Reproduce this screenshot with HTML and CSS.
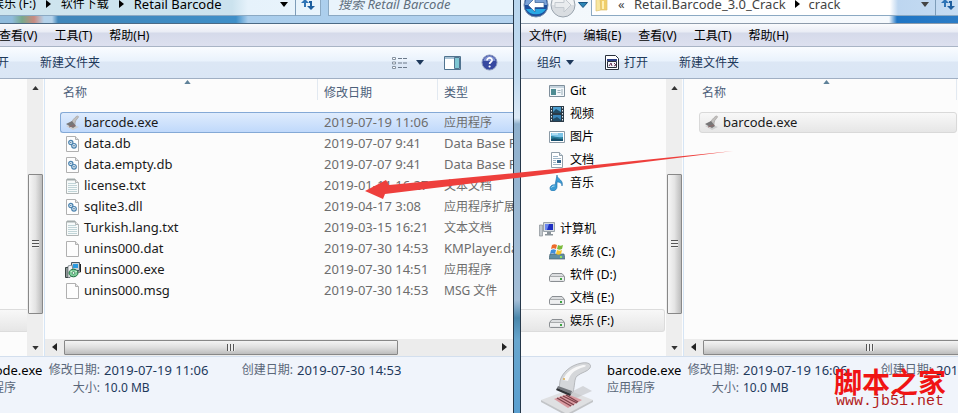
FILE: index.html
```html
<!DOCTYPE html>
<html lang="zh-CN">
<head>
    <meta charset="UTF-8">
    <meta name="viewport" content="width=device-width, initial-scale=1.0">
    <title>Retail Barcode</title>
    <link rel="stylesheet" href="styles.css">
</head>
<body>
    <svg class="symbols" aria-hidden="true">
        <symbol id="i-page" viewBox="0 0 16 16">
            <path d="M1.5 .5h9l3 3v12h-12z" fill="#fdfdfd" stroke="#b0b0b0"/>
            <path d="M10.500 .5v3h3" fill="#e4e4e4" stroke="#b0b0b0"/>
        </symbol>
        <symbol id="i-gear" viewBox="0 0 16 16">
            <path d="M1.500 .5h9l3 3v12h-12z" fill="#fdfdfd" stroke="#b0b0b0"/>
            <path d="M10.500 .5v3h3" fill="#e4e4e4" stroke="#b0b0b0"/>
            <circle cx="5.800" cy="6.500" r="2.100" fill="#e3eff8" stroke="#4a82ae" stroke-width="1.200"/>
            <circle cx="9" cy="9.800" r="2.300" fill="#e3eff8" stroke="#4a82ae" stroke-width="1.200"/>
            <circle cx="5.800" cy="6.500" r=".6" fill="#28587f"/>
            <circle cx="9" cy="9.800" r=".7" fill="#28587f"/>
        </symbol>
        <symbol id="i-txt" viewBox="0 0 16 16">
            <path d="M1.500 1.500h9l3 3v11h-12z" fill="#f7fafa" stroke="#b0b5b5"/>
            <path d="M3 0v3M5 0v3M7 0v3M9 0v3" stroke="#8e9a9a" stroke-width=".8"/>
            <path d="M3 5.500h8M3 7.500h9M3 9.500h9M3 11.500h9M3 13.500h9" stroke="#b9cfd3" stroke-width=".9"/>
            <path d="M10.500 1.500v3h3" fill="#e4e4e4" stroke="#b0b5b5"/>
        </symbol>
        <symbol id="i-setup" viewBox="0 0 16 16">
            <path d="M.5 5.500h4v10h-4z" fill="#8d9795" stroke="#3b4443"/>
            <path d="M6.500 .5h8v8h-8z" fill="#c9d4da" stroke="#4c5a63"/>
            <path d="M8 2h5v4H8z" fill="#2c9be0"/>
            <path d="M12 10h3.500V2" fill="none" stroke="#222"/>
            <path d="M3 4l4-1 2 10-6 3z" fill="#f4f6f7" stroke="#59636b" stroke-width=".7"/>
            <ellipse cx="8.500" cy="11" rx="4.500" ry="3.800" fill="#7ecf9b" stroke="#1a6b3b"/>
            <path d="M5.500 9l3 2 3.500-2" fill="none" stroke="#d8f8d9"/>
            <circle cx="8.500" cy="11" r="1.300" fill="#fff" stroke="#1a6b3b" stroke-width=".6"/>
        </symbol>
        <symbol id="i-scanner" viewBox="0 0 54 54">
            <path d="M1 39l27-10 25 10-26 15z" fill="#dfe0e2"/>
            <path d="M1 39l26 14v2L1 41zM27 53l26-14v2L27 55z" fill="#c2c4c7"/>
            <path d="M25 34l18-9 9 5-20 9z" fill="#b7b7ba" opacity=".5"/>
            <path d="M14 38l13-5 15 6-14 8z" fill="#d99aa0"/>
            <path d="M17 37l14 8M20 36l14 8M23 35l14 7M26 34l12 7" stroke="#7b3f47" stroke-width="1.200"/>
            <path d="M20 20C22 12 30 4 42 2c6-1 10 1 8 5-3 4-8 4-13 8-3 3-2 10-4 16l-2 2-12-5z" fill="#d5d7da" stroke="#a9acb0" stroke-width=".8"/>
            <path d="M23 19c3-8 10-13 20-15 3 0 4 1 1 2-9 3-13 5-16 14z" fill="#f7f7f8"/>
            <path d="M18 25l14 5-1 3-14-6z" fill="#75787d"/>
            <path d="M17 27l14 6-1 2-14-6z" fill="#2f3135"/>
            <circle cx="24" cy="18" r="1" fill="#d8a848"/>
        </symbol>
        <symbol id="i-scan-small" viewBox="0 0 16 16">
            <path d="M1 11l6-2 7 3-6 3z" fill="#cfcfcf"/>
            <path d="M6 8c1-2 3-5 6-7 2 0 2 1 0 3-2 2-2 4-2 7z" fill="#c2c0be" stroke="#9d9a98" stroke-width=".6"/>
            <path d="M1 9l6-3 4 5-3 2z" fill="#777677"/>
            <path d="M4 12l6-2" stroke="#8e6b6b"/>
        </symbol>
        <symbol id="i-app" viewBox="0 0 16 16">
            <path d="M.5 2.500h15v11H.5z" fill="#f4f8fb" stroke="#7f8f9c"/>
            <path d="M1 3h14v2H1z" fill="#c6d4de"/>
            <path d="M2 6h5v6H2z" fill="#4d8b92"/>
            <path d="M8.500 7.500h3M8.500 9.500h3M13 6v6" stroke="#9db0bb"/>
        </symbol>
        <symbol id="i-video" viewBox="0 0 16 16">
            <path d="M1 0h14v16H1z" fill="#2b3b48"/>
            <path d="M4 1h8v6H4z" fill="#4c9fd0"/>
            <path d="M4 9h8v6H4z" fill="#3b86ba"/>
            <path d="M4 6l3-3 5 3v1H4zM4 13l4-2 4 3v1H4z" fill="#224d68"/>
            <path d="M2.500 1v14M13.500 1v14" stroke="#e6ecf0" stroke-dasharray="1.500 1.500"/>
        </symbol>
        <symbol id="i-picture" viewBox="0 0 16 16">
            <path d="M.5 2.500h15v11H.5z" fill="#fff" stroke="#8b9aa6"/>
            <path d="M2 4h12v8H2z" fill="#7cc4e8"/>
            <path d="M2 7c4 0 6 2 12 1v4H2z" fill="#2a7f9c"/>
            <path d="M2 10c5-2 8 1 12 0v2H2z" fill="#17506e"/>
            <path d="M3 5h6" stroke="#e4f5fc"/>
        </symbol>
        <symbol id="i-document" viewBox="0 0 16 16">
            <path d="M2.500 .5h8l3 3v12h-11z" fill="#fff" stroke="#92a0ab"/>
            <path d="M10.500 .5v3h3" fill="#dde6ec" stroke="#92a0ab"/>
            <path d="M4 4.500h5M4 6.500h8M4 8.500h3M4 10.500h3M4 12.500h8" stroke="#9fb6c8"/>
            <path d="M8 8h4v3H8z" fill="#33648b"/>
        </symbol>
        <symbol id="i-music" viewBox="0 0 16 16">
            <path d="M8 0c0 4 7 5 5 11 0-3-2-4-5-4v5c0 2-2 4-4 4s-3-1-3-3c0-2 3-4 5-3z" fill="#3a9bd3" stroke="#1c6da8" stroke-width=".6"/>
            <path d="M2.500 12.500c.5-1 2-1.500 3-1.500" stroke="#b6e2f8" fill="none"/>
        </symbol>
        <symbol id="i-computer" viewBox="0 0 16 16">
            <path d="M.5 4h3v11h-3z" fill="#c2c8cd" stroke="#8a9197" stroke-width=".7"/>
            <path d="M4.500 1.500h11v9h-11z" fill="#d5dbe0" stroke="#9aa2a9"/>
            <path d="M6 3h8v6H6z" fill="#1d2fc2"/>
            <path d="M6 3h4L8 9H6z" fill="#6b87ee"/>
            <path d="M8 11h4v2h2v1.500H6V13h2z" fill="#8a939a"/>
        </symbol>
        <symbol id="i-drive" viewBox="0 0 16 16">
            <path d="M3 6.500h10l2.500 3v4q0 1-1 1h-13q-1 0-1-1v-4z" fill="#dcdee0" stroke="#8b8f93"/>
            <path d="M1 10h14v3.500H1z" fill="#eeeff0"/>
            <path d="M1 9.500h14" stroke="#a8abad"/>
            <path d="M11 11h2v2h-2z" fill="#3fa443"/>
        </symbol>
        <symbol id="i-windrive" viewBox="0 0 16 16">
            <path d="M1 10h14l1 5H0z" fill="#5f8ea3" stroke="#4a6674" stroke-width=".7"/>
            <path d="M11 12h2v2h-2z" fill="#8ee25c"/>
            <path d="M3 1c2-1 3-1 5 0L7 5C5 4 4 4 2 5z" fill="#ec6a2b"/>
            <path d="M9 1c2 1 3 1 5 0l-1 4c-2 1-3 1-5 0z" fill="#7cbb3c"/>
            <path d="M2 6c2-1 3-1 5 0l-1 4c-2-1-3-1-5 0z" fill="#3f8edb"/>
            <path d="M8 6c2 1 3 1 5 0l-1 4c-2 1-3 1-5 0z" fill="#f6c52e"/>
        </symbol>
        <symbol id="i-refresh" viewBox="0 0 14 14">
            <path d="M4 10V4" stroke="#2f74b5" stroke-width="2"/>
            <path d="M0 6l4-4 4 4z" fill="#2f74b5"/>
            <path d="M8 5h2v5" fill="none" stroke="#1f5f9f" stroke-width="2"/>
            <path d="M6 9l4 4 4-4z" fill="#1f5f9f"/>
        </symbol>
        <symbol id="i-down" viewBox="0 0 8 5"><path d="M0 0h8L4 5z" fill="currentColor"/></symbol>
        <symbol id="i-up" viewBox="0 0 8 5"><path d="M0 5h8L4 0z" fill="currentColor"/></symbol>
        <symbol id="i-right" viewBox="0 0 5 8"><path d="M0 0v8l5-4z" fill="currentColor"/></symbol>
        <symbol id="i-left" viewBox="0 0 5 8"><path d="M5 0v8L0 4z" fill="currentColor"/></symbol>
    </svg>

    <main class="desktop">
        <section class="window window-left">
            <header class="topbar">
                <nav class="address">
                    <a href="#">娱乐 (F:)</a>
                    <svg class="tri-h"><use href="#i-right"/></svg>
                    <a href="#">软件下载</a>
                    <svg class="tri-h"><use href="#i-right"/></svg>
                    <a href="#" class="latin">Retail Barcode</a>
                    <button class="history" aria-label="历史记录"><svg class="tri-v"><use href="#i-down"/></svg></button>
                    <button class="refresh" aria-label="刷新"><svg width="16" height="14"><use href="#i-refresh"/></svg></button>
                </nav>
                <label class="search">
                    <input type="search" placeholder="搜索 Retail Barcode" aria-label="搜索">
                    <svg width="15" height="15" viewBox="0 0 15 15"><circle cx="9" cy="5" r="4" fill="#e4f2fb" stroke="#3f6f9f" stroke-width="2"/><path d="M6 8l-5 6" stroke="#3f6f9f" stroke-width="2.500"/></svg>
                </label>
            </header>
            <nav class="menubar">
                <button>查看(V)</button>
                <button>工具(T)</button>
                <button>帮助(H)</button>
            </nav>
            <div class="toolbar">
                <button>打开</button>
                <button>新建文件夹</button>
                <div class="view-tools">
                    <button class="view" aria-label="更改视图">
                        <svg width="17" height="14" viewBox="0 0 17 14"><path d="M1.500 1.500h3v2h-3zM1.500 6h3v2h-3zM1.500 10.500h3v2h-3z" fill="#fff" stroke="#8592a1"/><path d="M7 2.500h4M12 2.500h4M7 7h4M12 7h4M7 11.500h4M12 11.500h4" stroke="#6c7a8b"/></svg>
                        <svg class="tri-v"><use href="#i-down"/></svg>
                    </button>
                    <button aria-label="预览窗格"><svg width="17" height="14" viewBox="0 0 17 14"><path d="M.5 .5h16v13H.5z" fill="#fff" stroke="#50738f"/><path d="M1 1h10v2H1z" fill="#a9c3d6"/><path d="M10.500 1.500h5v11h-5z" fill="#7fc6d3" stroke="#50738f"/></svg></button>
                    <button aria-label="帮助"><svg width="17" height="17" viewBox="0 0 17 17"><circle cx="8.500" cy="8.500" r="7.500" fill="#3748a0" stroke="#8b98bd"/><path d="M2.500 7a6 5 0 0 1 12 0z" fill="#7f90d0"/><path d="M6 6.500c0-3.500 5.500-3.300 5 0-.3 1.500-2.400 1.700-2.400 3.500" fill="none" stroke="#fff" stroke-width="1.700"/><circle cx="8.600" cy="12.500" r="1.100" fill="#fff"/></svg></button>
                </div>
            </div>
            <div class="panes">
                <aside class="tree tree-cut"><a class="current" href="#" aria-label="娱乐 (F:)"></a></aside>
                <div class="vscroll">
                    <svg class="tri-v"><use href="#i-up"/></svg>
                    <div class="thumb"><span class="grip"></span></div>
                    <svg class="tri-v"><use href="#i-down"/></svg>
                </div>
                <div class="files">
                    <table>
                        <colgroup><col class="col-name"><col class="col-date"><col></colgroup>
                        <thead>
                            <tr>
                                <th class="sorted">名称<svg class="sort"><use href="#i-up"/></svg></th>
                                <th>修改日期</th>
                                <th>类型</th>
                            </tr>
                        </thead>
                        <tbody>
                            <tr class="selected">
                                <td class="latin"><svg class="icon"><use href="#i-scan-small"/></svg>barcode.exe</td>
                                <td class="latin">2019-07-19 11:06</td>
                                <td>应用程序</td>
                            </tr>
                            <tr>
                                <td class="latin"><svg class="icon"><use href="#i-gear"/></svg>data.db</td>
                                <td class="latin">2019-07-07 9:41</td>
                                <td class="latin">Data Base File</td>
                            </tr>
                            <tr>
                                <td class="latin"><svg class="icon"><use href="#i-gear"/></svg>data.empty.db</td>
                                <td class="latin">2019-07-07 9:41</td>
                                <td class="latin">Data Base File</td>
                            </tr>
                            <tr>
                                <td class="latin"><svg class="icon"><use href="#i-txt"/></svg>license.txt</td>
                                <td class="latin">2019-01-11 16:27</td>
                                <td>文本文档</td>
                            </tr>
                            <tr>
                                <td class="latin"><svg class="icon"><use href="#i-gear"/></svg>sqlite3.dll</td>
                                <td class="latin">2019-04-17 3:08</td>
                                <td>应用程序扩展</td>
                            </tr>
                            <tr>
                                <td class="latin"><svg class="icon"><use href="#i-txt"/></svg>Turkish.lang.txt</td>
                                <td class="latin">2019-03-15 16:21</td>
                                <td>文本文档</td>
                            </tr>
                            <tr>
                                <td class="latin"><svg class="icon"><use href="#i-page"/></svg>unins000.dat</td>
                                <td class="latin">2019-07-30 14:53</td>
                                <td class="latin">KMPlayer.dat</td>
                            </tr>
                            <tr>
                                <td class="latin"><svg class="icon"><use href="#i-setup"/></svg>unins000.exe</td>
                                <td class="latin">2019-07-30 14:51</td>
                                <td>应用程序</td>
                            </tr>
                            <tr>
                                <td class="latin"><svg class="icon"><use href="#i-page"/></svg>unins000.msg</td>
                                <td class="latin">2019-07-30 14:53</td>
                                <td>MSG 文件</td>
                            </tr>
                        </tbody>
                    </table>
                    <div class="hscroll">
                        <svg class="tri-h"><use href="#i-left"/></svg>
                        <div class="thumb"><span class="grip"></span></div>
                        <svg class="tri-h"><use href="#i-right"/></svg>
                    </div>
                </div>
            </div>
            <footer class="details">
                <dl>
                    <dt class="name latin">barcode.exe</dt>
                    <dt>修改日期:</dt>
                    <dd class="latin">2019-07-19 11:06</dd>
                    <dt>创建日期:</dt>
                    <dd class="latin">2019-07-30 14:53</dd>
                    <dt class="kind">应用程序</dt>
                    <dt>大小:</dt>
                    <dd>10.0 MB</dd>
                </dl>
            </footer>
        </section>

        <div class="frame"></div>

        <section class="window window-right">
            <header class="topbar">
                <div class="travel">
                    <button aria-label="后退"><svg width="26" height="26" viewBox="0 0 26 26"><circle cx="13" cy="13" r="12" fill="#1d4f9c" stroke="#7e94b0"/><path d="M2 13a11 11 0 0 1 22 0z" fill="#7aa2d6"/><path d="M3 17a11 9 0 0 0 20 0z" fill="#27a8e4"/><path d="M12 6l-7 7 7 7v-4.500h9v-5h-9z" fill="#fff" stroke="#355f93" stroke-width=".7"/></svg></button>
                    <button aria-label="前进"><svg width="26" height="26" viewBox="0 0 26 26"><circle cx="13" cy="13" r="12" fill="#d9dde1" stroke="#9aa4ae"/><path d="M2 13a11 11 0 0 1 22 0z" fill="#f1f3f4"/><path d="M14 6l7 7-7 7v-4.500H5v-5h9z" fill="#e9ecee" stroke="#c3c9cf"/></svg></button>
                    <button aria-label="最近的页面"><svg width="10" height="6" viewBox="0 0 10 6"><path d="M.5 .5h9L5 5.500z" fill="#2d86b5" stroke="#1b5684"/></svg></button>
                </div>
                <nav class="address">
                    <svg width="14" height="16" viewBox="0 0 14 16"><path d="M1 2l5-2v14l-5 1z" fill="#f8e7a0" stroke="#dcc070" stroke-width=".7"/><path d="M5 3h7v11H6z" fill="#f1cf6b" stroke="#dcc070" stroke-width=".7"/><path d="M7 5h2v8H7z" fill="#fff0b3"/></svg>
                    <span class="more">«</span>
                    <a href="#" class="latin">Retail.Barcode_3.0_Crack</a>
                    <svg class="tri-h"><use href="#i-right"/></svg>
                    <a href="#" class="latin">crack</a>
                    <button class="history" aria-label="历史记录"><svg class="tri-v"><use href="#i-down"/></svg></button>
                    <button class="refresh" aria-label="刷新"><svg width="16" height="14"><use href="#i-refresh"/></svg></button>
                </nav>
            </header>
            <nav class="menubar">
                <button>文件(F)</button>
                <button>编辑(E)</button>
                <button>查看(V)</button>
                <button>工具(T)</button>
                <button>帮助(H)</button>
            </nav>
            <div class="toolbar">
                <button>组织 <svg class="tri-v"><use href="#i-down"/></svg></button>
                <button><svg width="14" height="15" viewBox="0 0 14 15"><path d="M.5 .5h10l3 3v11H.5z" fill="#fff" stroke="#29303c"/><path d="M2 4h10v2H2z" fill="#2b3e86"/><path d="M2.500 6.500h9v6h-9z" fill="#f3f5fa" stroke="#29303c"/><path d="M4 11l2-3 1 3M9 8l2 2-2 1" stroke="#6a3556" fill="none"/></svg>打开</button>
                <button>新建文件夹</button>
            </div>
            <div class="panes">
                <aside class="tree">
                    <a href="#"><svg class="icon"><use href="#i-app"/></svg>Git</a>
                    <a href="#"><svg class="icon"><use href="#i-video"/></svg>视频</a>
                    <a href="#"><svg class="icon"><use href="#i-picture"/></svg>图片</a>
                    <a href="#"><svg class="icon"><use href="#i-document"/></svg>文档</a>
                    <a href="#"><svg class="icon"><use href="#i-music"/></svg>音乐</a>
                    <a href="#" class="root"><svg class="icon"><use href="#i-computer"/></svg>计算机</a>
                    <a href="#"><svg class="icon"><use href="#i-windrive"/></svg>系统 (C:)</a>
                    <a href="#"><svg class="icon"><use href="#i-drive"/></svg>软件 (D:)</a>
                    <a href="#"><svg class="icon"><use href="#i-drive"/></svg>文档 (E:)</a>
                    <a href="#" class="current"><svg class="icon"><use href="#i-drive"/></svg>娱乐 (F:)</a>
                </aside>
                <div class="vscroll">
                    <svg class="tri-v"><use href="#i-up"/></svg>
                    <div class="thumb"><span class="grip"></span></div>
                    <svg class="tri-v"><use href="#i-down"/></svg>
                </div>
                <div class="files">
                    <table>
                        <thead>
                            <tr><th class="sorted">名称<svg class="sort"><use href="#i-up"/></svg></th></tr>
                        </thead>
                        <tbody>
                            <tr class="inactive"><td class="latin"><svg class="icon"><use href="#i-scan-small"/></svg>barcode.exe</td></tr>
                        </tbody>
                    </table>
                    <div class="hscroll">
                        <svg class="tri-h"><use href="#i-left"/></svg>
                        <div class="thumb"><span class="grip"></span></div>
                    </div>
                </div>
            </div>
            <footer class="details">
                <svg class="preview"><use href="#i-scanner"/></svg>
                <dl>
                    <dt class="name latin">barcode.exe</dt>
                    <dt>修改日期:</dt>
                    <dd class="latin">2019-07-19 16:06</dd>
                    <dt>创建日期:</dt>
                    <dd class="latin">2019-07-19</dd>
                    <dt class="kind">应用程序</dt>
                    <dt>大小:</dt>
                    <dd>10.0 MB</dd>
                </dl>
            </footer>
        </section>

        <svg class="drag-arrow" viewBox="0 0 958 413" preserveAspectRatio="none">
            <path d="M733 151L525 172L389 185L386 180L365 191L383 199L385 194L525 177Z" fill="#ee3f3c"/>
        </svg>

        <div class="watermark">
            <strong>脚本之家</strong>
            <span>www.jb51.net</span>
        </div>
    </main>
</body>
</html>
```

FILE: styles.css
```css
* {
    box-sizing: border-box;
}
body {
    margin: 0;
    font-family: "Noto Sans", "Noto Sans CJK SC", sans-serif;
    font-size: 12px;
    line-height: 18px;
    color: #000;
}
a {
    color: inherit;
    text-decoration: none;
}
button {
    display: flex;
    align-items: center;
    gap: 5px;
    padding: 0;
    border: none;
    background: none;
    font: inherit;
    color: inherit;
    white-space: nowrap;
}
svg {
    flex: none;
}
.symbols {
    display: none;
}
.latin {
    font-size: 13px;
}
.icon {
    width: 16px;
    height: 16px;
}
.tri-v {
    width: 8px;
    height: 5px;
}
.tri-h {
    width: 5px;
    height: 8px;
}

.desktop {
    position: relative;
    display: grid;
    grid-template-columns: 513fr 8px 437fr;
    height: 100vh;
    overflow: hidden;
}
.window {
    display: flex;
    flex-direction: column;
    min-width: 0;
    overflow: hidden;
}
.frame {
    border: solid #26384a;
    border-width: 0 1px;
    background: linear-gradient(#b9d6ee 0, #c3dbf0 80px, #dce9f6 118px, #8fb0cd 124px, #a5bfd8 300px, #4a87ac 318px, #68a6ce 340px, #5b9fd0 100%);
}

/* address bar */
.topbar {
    flex: none;
    display: flex;
    align-items: flex-end;
    height: 24px;
    padding-bottom: 7px;
    overflow: hidden;
    border-bottom: 1px solid #4c6a85;
}
.window-left .topbar {
    gap: 7px;
    padding-right: 2px;
    background: linear-gradient(90deg, #8fbbdc 0, #8fbbdc 12px, #78a98b 22px, #c98a80 34px, #b4d2ea 44px, #b4d2ea 52px, #3f86ba 58px, #3f8fc8 236px, #a9cdec 248px, #b4d3ef 100%);
}
.window-right .topbar {
    border-bottom-color: #8d9bab;
    background: linear-gradient(90deg, #f3f8fc 0, #f5f9fd 368px, #1f75c4 376px, #2b7cc6 100%);
}
.address {
    display: flex;
    align-items: center;
    height: 24px;
    border: 1px solid #8ba9c3;
    white-space: nowrap;
}
.window-left .address {
    flex: 0 0 330px;
    gap: 10px;
    margin-left: -9px;
    background: linear-gradient(90deg, #cfe5ee 0, #cbe2ee 240px, #e6f2fb 256px, #e9f4fc 100%);
}
.window-right .address {
    flex: 1;
    min-width: 0;
    gap: 9px;
    padding-left: 3px;
    margin-right: -3px;
    color: #444;
    background: linear-gradient(90deg, #fff 0, #fff 298px, #bdd6f0 306px, #c6dcf2 100%);
}
.address .tri-h {
    color: #000;
}
.address .more {
    width: 7px;
    font-size: 13px;
}
.address .history {
    margin-left: auto;
    margin-right: -3px;
}
.address .refresh {
    height: 24px;
    padding: 0 4px;
    border-left: 1px solid #7e9db9;
}
.search {
    flex: 1;
    display: flex;
    align-items: center;
    height: 24px;
    padding: 0 5px 0 9px;
    border: 1px solid #8ba9c3;
    background: #e9f4fc;
}
.search input {
    flex: 1;
    min-width: 0;
    padding: 0;
    border: none;
    background: none;
    font: inherit;
    font-size: 13px;
    font-style: italic;
}
.search input::placeholder {
    color: #5f6f7d;
}
.travel {
    display: flex;
    align-items: center;
    gap: 1px;
    height: 22px;
    width: 70px;
    padding-left: 2px;
}
.travel button + button + button {
    margin-left: 1px;
}

/* menus and commands */
.menubar {
    flex: none;
    display: flex;
    align-items: center;
    gap: 17px;
    height: 23px;
    padding: 1px 0 0 8px;
    border-bottom: 1px solid #a9b4c5;
    background: linear-gradient(#fafbfd 0, #e9ecf5 8px, #d5daea 9px, #dde0ef 100%);
}
.window-left .menubar {
    padding-left: 0;
    margin-left: -1px;
}
.toolbar {
    flex: none;
    display: flex;
    align-items: center;
    gap: 31px;
    height: 32px;
    padding: 0 15px 0 16px;
    border-bottom: 1px solid #a0afc3;
    background: linear-gradient(#fafcff 0, #e9f2fc 14px, #dce7f5 15px, #dae6f5 100%);
    color: #1e395b;
}
.window-left .toolbar {
    padding-left: 0;
}
.window-left .toolbar > button:first-child {
    margin-left: -15px;
}
.view-tools {
    display: flex;
    align-items: center;
    gap: 20px;
    margin-left: auto;
}
.view {
    gap: 8px;
}

/* folder tree */
.panes {
    flex: 1;
    display: flex;
    min-height: 0;
    background: #fcfcfc;
}
.tree {
    flex: none;
    width: 145px;
    padding-right: 1px;
}
.tree a {
    display: flex;
    align-items: center;
    gap: 5px;
    height: 23px;
    padding-left: 28px;
}
.tree .root {
    margin-top: 23px;
    padding-left: 18px;
}
.tree .current {
    border: 1px solid #dcdcdc;
    border-left: none;
    border-radius: 0 3px 3px 0;
    background: linear-gradient(#f8f8f8, #e6e6e6);
}
.tree-cut {
    width: 27px;
}
.tree-cut .current {
    margin-top: 230px;
}

/* scroll bars */
.vscroll {
    flex: none;
    display: flex;
    flex-direction: column;
    align-items: center;
    width: 16px;
    padding: 7px 0 6px;
    background: #eee;
    color: #333;
}
.vscroll .tri-v:first-child {
    margin-bottom: 84px;
}
.vscroll .tri-v:last-child {
    margin-top: auto;
}
.vscroll .tri-v {
    width: 7px;
    height: 4px;
}
.thumb {
    display: flex;
    align-items: center;
    justify-content: center;
    border: 1px solid #888;
    border-radius: 1px;
}
.vscroll .thumb {
    width: 15px;
    height: 140px;
    background: linear-gradient(90deg, #f6f6f6, #e4e4e4 50%, #bcbcbc);
}
.vscroll .grip {
    width: 7px;
    height: 8px;
    background: repeating-linear-gradient(#555 0, #555 1px, #eee 1px, #eee 3px);
}
.hscroll {
    flex: none;
    display: flex;
    align-items: center;
    height: 17px;
    padding: 0 6px 1px 7px;
    background: #ececec;
    color: #222;
}
.hscroll .thumb {
    flex: 0 0 334px;
    height: 15px;
    margin-left: 7px;
    background: linear-gradient(#f4f4f4, #dedede 50%, #bdbdbd);
}
.hscroll .tri-h:last-child {
    margin-left: auto;
}
.hscroll .grip {
    width: 8px;
    height: 7px;
    background: repeating-linear-gradient(90deg, #555 0, #555 1px, #eee 1px, #eee 3px);
}

/* file list */
.files {
    flex: 1;
    display: flex;
    flex-direction: column;
    justify-content: space-between;
    min-width: 0;
    overflow: hidden;
    margin-left: 1px;
    border-left: 1px solid #d6e5f5;
}
table {
    width: calc(100% - 15px);
    margin-left: 15px;
    table-layout: fixed;
    border-collapse: separate;
    border-spacing: 0;
}
.window-right table {
    width: calc(100% - 16px);
}
.col-name {
    width: 258px;
}
.col-date {
    width: 120px;
}
th {
    height: 33px;
    padding: 0 0 6px 6px;
    font-weight: normal;
    text-align: left;
    color: #4c607a;
    background: linear-gradient(#e2e9f1, #e2e9f1) right top / 1px 21px no-repeat;
}
.window-left th:last-child {
    background: none;
}
th.sorted {
    position: relative;
    padding-left: 3px;
}
.sort {
    position: absolute;
    top: 1px;
    left: calc(50% - 5px);
    width: 7px;
    height: 4px;
    color: #5f8299;
}
td {
    height: 21px;
    padding: 0 0 0 6px;
    overflow: hidden;
    line-height: 21px;
    white-space: nowrap;
    color: #6d6d6d;
}
td:first-child {
    padding-left: 5px;
    color: #1a1a1a;
}
td .icon {
    margin-right: 3px;
    vertical-align: -4px;
}
.selected td {
    border: solid #84a9d6;
    border-width: 1px 0;
    background: linear-gradient(#dfecfd, #c0d9fb);
    line-height: 19px;
}
.selected td:first-child {
    border-left-width: 1px;
    border-radius: 3px 0 0 3px;
    padding-left: 4px;
}
.inactive td {
    border: 1px solid #d9d9d9;
    border-radius: 3px;
    background: linear-gradient(#f8f8f8, #e6e6e6);
    line-height: 19px;
}
.inactive td:first-child {
    padding-left: 4px;
}

/* details pane */
.details {
    flex: none;
    display: flex;
    gap: 13px;
    height: 57px;
    padding: 4px 0 0 19px;
    overflow: hidden;
    border-top: 1px solid #d3dfee;
    background: #f0f4fb;
}
.window-left .details {
    padding-left: 0;
}
.window-left .details dl {
    margin-left: -32px;
}
.preview {
    width: 54px;
    height: 54px;
}
dl {
    display: grid;
    grid-template-columns: 76px 52px 133px 52px 110px;
    grid-auto-rows: 18px;
    column-gap: 4px;
    margin: 0;
    white-space: nowrap;
}
dt {
    text-align: right;
    color: #5a6779;
}
dd {
    margin: 0;
    color: #1e395b;
}
.details .name {
    text-align: left;
    color: #000;
}
.details .kind {
    text-align: left;
}

/* overlays */
.drag-arrow {
    position: absolute;
    inset: 0;
    width: 100%;
    height: 100%;
    pointer-events: none;
}
.watermark {
    position: absolute;
    right: 12px;
    bottom: 4px;
    display: flex;
    flex-direction: column;
    align-items: center;
    color: #f01414;
}
.watermark strong {
    font-family: "Noto Sans CJK SC", sans-serif;
    font-size: 28px;
    line-height: 28px;
}
.watermark span {
    font-family: "Liberation Mono", monospace;
    font-size: 15px;
    line-height: 14px;
    color: #b01c1c;
}
```
